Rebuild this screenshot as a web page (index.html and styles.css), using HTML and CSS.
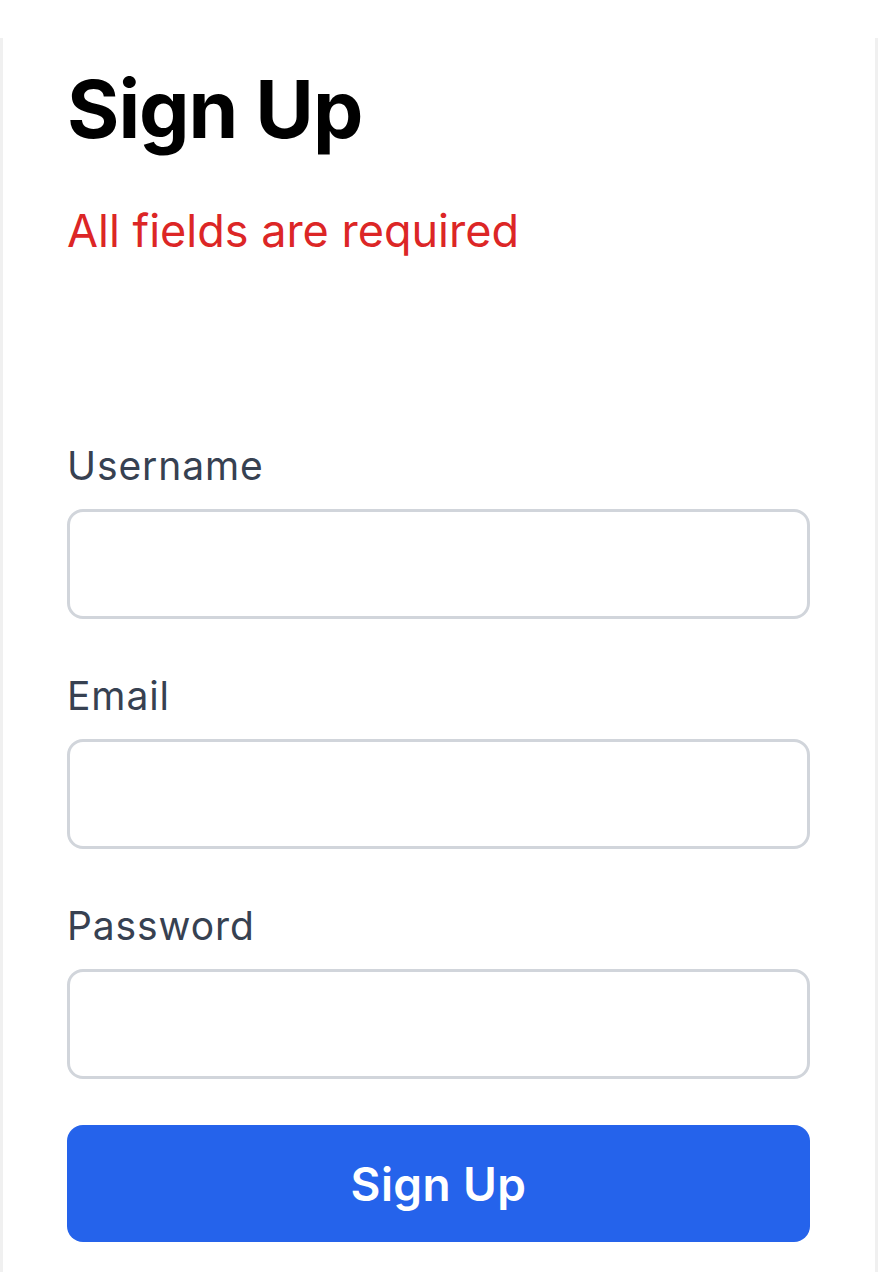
FILE: index.html
```html
<!DOCTYPE html>
<html lang="en">
<head>
<meta charset="utf-8">
<title>Sign Up</title>
<link rel="stylesheet" href="styles.css">
</head>
<body>
<main class="card">
  <h1 class="title">Sign Up</h1>
  <p class="error">All fields are required</p>
  <form class="form">
    <div class="field">
      <label class="label" for="username">Username</label>
      <input class="input" id="username" type="text">
    </div>
    <div class="field">
      <label class="label" for="email">Email</label>
      <input class="input" id="email" type="email">
    </div>
    <div class="field">
      <label class="label" for="password">Password</label>
      <input class="input" id="password" type="password">
    </div>
    <button class="button" type="button">Sign Up</button>
  </form>
</main>
</body>
</html>
```

FILE: styles.css
```css
html, body {
  margin: 0;
  padding: 0;
  background: #ffffff;
}

body {
  font-family: Inter, "Noto Sans", "Liberation Sans", sans-serif;
  padding-top: 38px;
}

.card {
  box-sizing: border-box;
  height: 1234px;
  border-left: 3px solid #f0f0f0;
  border-right: 3px solid #f0f0f0;
  padding: 23px 65px 0 64px;
}

.title {
  margin: 0;
  font-size: 80px;
  line-height: 96px;
  font-weight: 700;
  color: #000000;
  letter-spacing: -1px;
}

.error {
  margin: 46px 0 0;
  font-size: 45px;
  line-height: 56px;
  color: #dc2626;
}

.form {
  margin-top: 185px;
  display: flex;
  flex-direction: column;
}

.field {
  display: flex;
  flex-direction: column;
  gap: 21px;
  margin-bottom: 55px;
}

.field:nth-child(3) {
  margin-bottom: 46px;
}

.label {
  font-size: 39px;
  line-height: 44px;
  letter-spacing: 0.9px;
  color: #374151;
}

.input {
  box-sizing: border-box;
  height: 110px;
  border: 3px solid #d1d5db;
  border-radius: 16px;
  background: #ffffff;
  margin: 0;
  width: 100%;
}

.button {
  height: 117px;
  border: none;
  border-radius: 16px;
  background: #2563eb;
  color: #ffffff;
  font-family: inherit;
  font-size: 46px;
  font-weight: 600;
  letter-spacing: 0.4px;
}
```
